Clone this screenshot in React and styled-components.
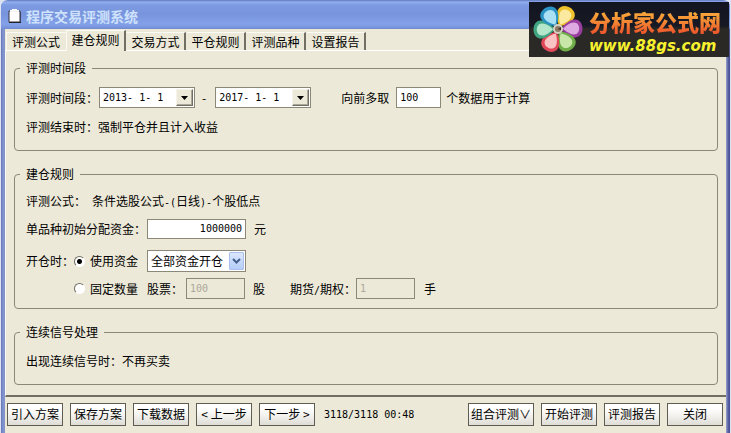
import React, { useState } from "react";
import styled, { createGlobalStyle, css } from "styled-components";

const c = {
  face: "#ece9d8",
  line: "#8b8878",
  dark: "#716f64",
  shade: "#aca899",
};

const GlobalStyle = createGlobalStyle`
  *, *::before, *::after { box-sizing: border-box; }
  body {
    margin: 0;
    background: #dde3f2;
    color: #000;
    font: 12px/16px "Noto Sans CJK SC", sans-serif;
  }
  button, input, select { font: inherit; color: inherit; margin: 0; }
`;

const numeric = css`
  font-family: "DejaVu Sans Mono", "Noto Sans CJK SC", monospace;
  font-size: 10px;
`;

const Window = styled.div`
  position: relative;
  display: flex;
  flex-direction: column;
  min-height: 100vh;
  margin: 0 1px;
  padding: 0 4px;
  border-radius: 7px 7px 0 0;
  background: linear-gradient(to right, #6475b4, #8295d2 2px, #8192c8 4px, transparent 4px,
    transparent calc(100% - 4px), #9aa6ce calc(100% - 4px), #5a63a4 calc(100% - 2px), #454c90), ${c.face};
`;

const TitleBar = styled.header`
  display: flex;
  align-items: center;
  gap: 5px;
  height: 29px;
  margin: 0 -4px;
  padding: 2px 7px 0;
  border-radius: 7px 7px 0 0;
  background: linear-gradient(#6177bd 0, #91aff0 2px, #7d9be2 5px, #7894dc 14px, #83a1e8 24px, #7a96df 27px, #7189cc 29px);
`;

const Title = styled.h1`
  margin: 0;
  color: #cfe2fc;
  font-size: 14px;
  line-height: 20px;
  font-weight: 700;
`;

const TabStrip = styled.div`
  display: flex;
  align-items: flex-end;
  height: 22px;
  margin-bottom: -1px;
  padding-left: 1px;
`;

const Tab = styled.button`
  position: relative;
  width: 60px;
  height: ${(p) => (p.$active ? 21 : 18)}px;
  margin-bottom: ${(p) => (p.$active ? 0 : 1)}px;
  padding: ${(p) => (p.$active ? "0 0 2px" : "0")};
  border: 0;
  border-top: 1px solid #fbfaf4;
  border-left: 1px solid ${(p) => (p.$edge ? "#fbfaf4" : "transparent")};
  border-right: ${(p) => (p.$before ? "1px solid transparent" : `2px solid ${c.dark}`)};
  background: ${c.face};
  line-height: 16px;
  white-space: nowrap;
`;

const Page = styled.main`
  flex: 1;
  display: flex;
  flex-direction: column;
  gap: 15px;
  padding: 9px 8px 10px;
  border-top: 1px solid #fff;
  border-left: 1px solid #faf9f3;
  border-bottom: 2px solid ${c.dark};
`;

const Group = styled.fieldset`
  min-width: 0;
  margin: 0;
  padding: ${(p) => p.$top || 11}px 11px ${(p) => p.$bottom || 15}px;
  border: 1px solid ${c.line};
  border-radius: 4px;
`;

const Legend = styled.legend`
  margin-left: -6px;
  padding: 0 6px;
  line-height: 16px;
`;

const Row = styled.div`
  display: flex;
  align-items: center;
  min-height: ${(p) => p.$h || 16}px;
  margin-top: ${(p) => p.$gap || 0}px;
  white-space: nowrap;
`;

const Text = styled.span`
  margin-left: ${(p) => p.$ml || 0}px;
`;

const Mono = styled.span`
  ${numeric}
  line-height: 1;
`;

const Label = styled.label`
  margin-left: ${(p) => p.$ml || 0}px;
`;

const LeadLabel = styled.span`
  width: 48px;
`;

const Choice = styled.label`
  display: flex;
  align-items: center;
  gap: 5px;
  width: 73px;
`;

const Radio = styled.input`
  appearance: none;
  width: 11px;
  height: 11px;
  border: 1px solid;
  border-color: ${c.dark} #fff #fff ${c.dark};
  border-radius: 50%;
  background: #fff;
  &:checked {
    background: radial-gradient(circle, #000 2px, #fff 3px);
  }
`;

const Field = styled.input`
  ${numeric}
  width: ${(p) => p.$w}px;
  height: ${(p) => p.$h || 21}px;
  margin-left: ${(p) => p.$ml || 0}px;
  padding: 0 3px 1px;
  border: 1px solid ${c.line};
  border-radius: 0;
  background: #fff;
  text-align: ${(p) => (p.$right ? "right" : "left")};
  &:disabled {
    background: ${c.face};
    color: ${c.shade};
  }
`;

const DateBox = styled.div`
  display: flex;
  width: 96px;
  height: 21px;
  margin-left: ${(p) => p.$ml || 0}px;
  padding: 1px;
  border: 1px solid ${c.line};
  background: #fff;
`;

const DateInput = styled.input`
  ${numeric}
  flex: 1;
  min-width: 0;
  padding: 0 2px;
  border: 0;
  background: transparent;
`;

const DropButton = styled.button`
  display: grid;
  place-items: center;
  width: 17px;
  padding: 0;
  border: 1px solid;
  border-color: #f6f4ea ${c.dark} ${c.dark} #f6f4ea;
  box-shadow: inset -1px -1px ${c.shade};
  background: ${c.face};
`;

const SelectBox = styled.div`
  position: relative;
  width: 99px;
  height: 22px;
`;

const Select = styled.select`
  appearance: none;
  width: 100%;
  height: 100%;
  padding: 0 18px 1px 3px;
  border: 1px solid ${c.line};
  border-radius: 0;
  background: #fff;
`;

const SelectArrow = styled.span`
  position: absolute;
  top: 2px;
  right: 2px;
  bottom: 2px;
  width: 15px;
  display: grid;
  place-items: center;
  border: 1px solid #a9c0ee;
  border-radius: 1px;
  background: linear-gradient(#dbe7fd, #b5cdf8);
  pointer-events: none;
`;

const Footer = styled.footer`
  display: flex;
  align-items: center;
  gap: 7px;
  padding: 6px 3px 7px 2px;
`;

const Command = styled.button`
  width: ${(p) => p.$w || 56}px;
  height: 23px;
  padding: 0 0 1px;
  border: 1px solid #5f5d52;
  border-radius: 0;
  background: linear-gradient(#fff 20%, #f3f2ee 55%, #dedcd5);
  line-height: 16px;
  white-space: nowrap;
`;

const Status = styled.output`
  ${numeric}
  margin: 0 auto 0 2px;
`;

const Banner = styled.a`
  position: absolute;
  top: 2px;
  right: 1px;
  display: flex;
  align-items: center;
  gap: 5px;
  width: 200px;
  height: 55px;
  padding-left: 2px;
  background: linear-gradient(#121420 0, #171a25 24px, #2b2926 27px, #2b2926 100%);
  text-decoration: none;
  white-space: nowrap;
`;

const BannerText = styled.span`
  display: flex;
  flex-direction: column;
`;

const BannerName = styled.strong`
  font-size: 22px;
  line-height: 32px;
  font-weight: 900;
  color: transparent;
  background: linear-gradient(#f8b13c 15%, #f38b34 50%, #ee5a2c 85%);
  background-clip: text;
`;

const BannerSite = styled.span`
  color: #f8f22e;
  font: italic 700 15px/18px "DejaVu Sans", sans-serif;
`;

const ClipboardIcon = () => (
  <svg width="13" height="14" viewBox="0 0 13 14" aria-hidden="true">
    <path d="M1 2h11v11H1z" fill="#fff" stroke="#34343c" />
    <path d="M2 2V1h2V0h5v1h2v1z" fill="#fff" />
    <path d="M1 13.5h12V3" fill="none" stroke="#202028" />
    <path d="M2 2.5h9" stroke="#f4f4f4" />
  </svg>
);

const Triangle = () => (
  <svg width="7" height="4" viewBox="0 0 7 4" aria-hidden="true">
    <path d="M0 0h7L3.5 4z" fill="#000" />
  </svg>
);

const petals = [
  ["#eec22c", "#fbe9a0", 28],
  ["#9a3f9f", "#dfa9e2", 88],
  ["#6fae48", "#c8e6a8", 148],
  ["#e04a58", "#fbc4c4", 208],
  ["#3fa583", "#b4e6cc", 268],
  ["#2b93c4", "#a9e0f4", 328],
];

const Flower = () => (
  <svg width="53" height="51" viewBox="-27 -25 53 51" aria-hidden="true">
    {petals.map(([outer, inner, angle]) => (
      <g key={angle} transform={`rotate(${angle})`}>
        <path d="M0-3C-5-7-9-12-9-17C-9-27 9-27 9-17C9-12 5-7 0-3Z" fill={outer} />
        <path d="M0-5C-3-8-6-12-6-16C-6-23 6-23 6-16C6-12 3-8 0-5Z" fill={inner} />
      </g>
    ))}
    <circle r="5" fill="#d6d0c2" />
    <circle r="3" fill="#8b7964" />
    <path d="M0 0l3-2v3z" fill="#322" />
  </svg>
);

const TABS = ["评测公式", "建仓规则", "交易方式", "平仓规则", "评测品种", "设置报告"];

function DateField({ label, value, ml }) {
  return (
    <DateBox $ml={ml}>
      <DateInput aria-label={label} defaultValue={value} />
      <DropButton type="button" aria-label={`${label} ▾`}>
        <Triangle />
      </DropButton>
    </DateBox>
  );
}

export default function App() {
  const [tab, setTab] = useState(1);
  const [mode, setMode] = useState("funds");

  return (
    <>
      <GlobalStyle />
      <Window>
        <TitleBar>
          <ClipboardIcon />
          <Title>程序交易评测系统</Title>
        </TitleBar>
        <TabStrip role="tablist">
          {TABS.map((name, i) => (
            <Tab
              key={name}
              type="button"
              role="tab"
              aria-selected={i === tab}
              $active={i === tab}
              $before={i + 1 === tab}
              $edge={i === 0 || i === tab}
              onClick={() => setTab(i)}
            >
              {name}
            </Tab>
          ))}
        </TabStrip>
        <Page>
          <Group>
            <Legend>评测时间段</Legend>
            <Row $h={21}>
              <Text>评测时间段：</Text>
              <DateField label="开始" value="2013- 1- 1" ml={1} />
              <Text $ml={7}>-</Text>
              <DateField label="结束" value="2017- 1- 1" ml={9} />
              <Label htmlFor="ahead" $ml={30}>向前多取</Label>
              <Field id="ahead" defaultValue="100" $w={45} $ml={7} />
              <Text $ml={5}>个数据用于计算</Text>
            </Row>
            <Row $gap={11}>评测结束时：强制平仓并且计入收益</Row>
          </Group>

          <Group $bottom={9}>
            <Legend>建仓规则</Legend>
            <Row>
              <Text>评测公式：</Text>
              <Text $ml={6}>
                条件选股公式<Mono>-(</Mono>日线<Mono>)-</Mono>个股低点
              </Text>
            </Row>
            <Row $h={20} $gap={10}>
              <Label htmlFor="capital">单品种初始分配资金：</Label>
              <Field id="capital" defaultValue="1000000" $w={99} $h={20} $ml={1} $right />
              <Text $ml={8}>元</Text>
            </Row>
            <Row $h={22} $gap={11}>
              <LeadLabel>开仓时：</LeadLabel>
              <Choice>
                <Radio type="radio" name="mode" checked={mode === "funds"} onChange={() => setMode("funds")} />
                使用资金
              </Choice>
              <SelectBox>
                <Select aria-label="使用资金" defaultValue="all">
                  <option value="all">全部资金开仓</option>
                </Select>
                <SelectArrow>
                  <svg width="9" height="7" viewBox="0 0 9 7" aria-hidden="true">
                    <path d="M1 1l3.5 3.5L8 1" fill="none" stroke="#43608c" strokeWidth="2" />
                  </svg>
                </SelectArrow>
              </SelectBox>
            </Row>
            <Row $h={21} $gap={6}>
              <LeadLabel />
              <Choice>
                <Radio type="radio" name="mode" checked={mode === "fixed"} onChange={() => setMode("fixed")} />
                固定数量
              </Choice>
              <Label htmlFor="stock">股票：</Label>
              <Field id="stock" defaultValue="100" $w={59} $ml={3} disabled={mode === "funds"} />
              <Text $ml={8}>股</Text>
              <Label htmlFor="futures" $ml={25}>
                期货<Mono>/</Mono>期权：
              </Label>
              <Field id="futures" defaultValue="1" $w={59} disabled={mode === "funds"} />
              <Text $ml={9}>手</Text>
            </Row>
          </Group>

          <Group $top={13}>
            <Legend>连续信号处理</Legend>
            <Row>出现连续信号时：不再买卖</Row>
          </Group>
        </Page>
        <Footer>
          <Command type="button">引入方案</Command>
          <Command type="button">保存方案</Command>
          <Command type="button">下载数据</Command>
          <Command type="button">&lt; 上一步</Command>
          <Command type="button">下一步 &gt;</Command>
          <Status>3118/3118 00:48</Status>
          <Command type="button" $w={66}>组合评测∨</Command>
          <Command type="button">开始评测</Command>
          <Command type="button">评测报告</Command>
          <Command type="button">关闭</Command>
        </Footer>
        <Banner href="#">
          <Flower />
          <BannerText>
            <BannerName>分析家公式网</BannerName>
            <BannerSite>www.88gs.com</BannerSite>
          </BannerText>
        </Banner>
      </Window>
    </>
  );
}
